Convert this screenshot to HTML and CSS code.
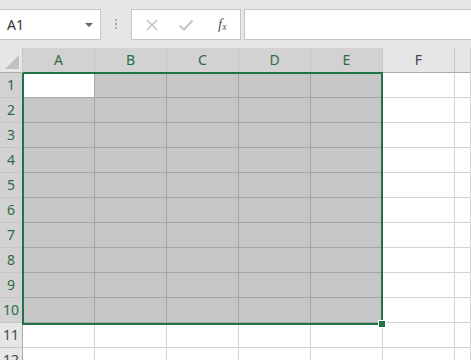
FILE: index.html
```
<!DOCTYPE html>
<html lang="ja">
  <head>
    <meta charset="UTF-8" />
    <meta name="viewport" content="width=device-width, initial-scale=1.0" />
    <title>Sheet</title>
    <link rel="stylesheet" href="styles.css">
  </head>
  <body>
    <div class="toolbar">
      <div class="name-box">
        <span class="name-text">A1</span>
        <span class="drop-arrow"></span>
      </div>
      <div class="grip"><span></span><span></span><span></span></div>
      <div class="fx-box">
        <svg class="tool-icon" width="14" height="14" viewBox="0 0 14 14">
          <path d="M2 2 L12 12 M12 2 L2 12" stroke="#c4c4c4" stroke-width="1.6" fill="none" />
        </svg>
        <svg class="tool-icon" width="16" height="14" viewBox="0 0 16 14">
          <path d="M1.5 7.5 L6 11.5 L14.5 2.5" stroke="#c4c4c4" stroke-width="2" fill="none" />
        </svg>
        <span class="fx">f<sub>x</sub></span>
      </div>
      <div class="formula-input"></div>
    </div>

    <div class="sheet" id="sheet">
      <div class="selection"><span class="fill-handle"></span></div>
    </div>

    <script>
      const sheet = document.getElementById("sheet");
      const cols = ["A", "B", "C", "D", "E", "F", ""];

      function cell(cls, text) {
        const div = document.createElement("div");
        div.className = cls;
        div.textContent = text || "";
        sheet.appendChild(div);
      }

      cell("corner");
      cols.forEach((c, i) => cell(i < 5 ? "col-head sel" : "col-head", c));

      for (let r = 1; r <= 12; r++) {
        cell(r <= 10 ? "row-head sel" : "row-head", r);
        cols.forEach((c, i) => {
          let cls = "cell";
          if (r <= 10 && i < 5) cls += r === 1 && i === 0 ? " active" : " picked";
          cell(cls);
        });
      }
    </script>
  </body>
</html>
```

FILE: styles.css
```
body {
  margin: 0;
  background: #fff;
  font-family: "Noto Sans", "Liberation Sans", sans-serif;
  overflow: hidden;
  width: 471px;
  height: 360px;
}

/* Formula bar */
.toolbar {
  height: 48px;
  background: #e6e6e6;
  display: flex;
  align-items: center;
}

.name-box {
  box-sizing: border-box;
  width: 102px;
  height: 31px;
  margin-left: -1px;
  margin-top: 1px;
  background: #fff;
  border: 1px solid #c6c6c6;
  display: flex;
  align-items: center;
  justify-content: space-between;
  padding: 0 7px 0 7px;
}

.name-text {
  font-size: 14px;
  color: #333;
}

.drop-arrow {
  width: 0;
  height: 0;
  border-left: 4px solid transparent;
  border-right: 4px solid transparent;
  border-top: 4px solid #666;
  margin-top: 1px;
}

.grip {
  width: 30px;
  display: flex;
  flex-direction: column;
  align-items: center;
  gap: 2px;
}

.grip span {
  width: 2px;
  height: 2px;
  background: #a6a6a6;
}

.fx-box {
  box-sizing: border-box;
  width: 110px;
  height: 31px;
  margin-top: 1px;
  background: #fff;
  border: 1px solid #c6c6c6;
  display: flex;
  align-items: center;
  padding-left: 13px;
  gap: 19px;
}

.fx {
  font-family: "Liberation Serif", serif;
  font-style: italic;
  font-size: 15px;
  color: #555;
  margin-left: 5px;
}

.fx sub {
  font-size: 10px;
  vertical-align: -1px;
}

.formula-input {
  flex: 1;
  box-sizing: border-box;
  height: 31px;
  margin-top: 1px;
  margin-left: 3px;
  margin-right: -2px;
  background: #fff;
  border: 1px solid #c6c6c6;
}

/* Grid */
.sheet {
  position: relative;
  display: grid;
  grid-template-columns: 23px repeat(6, 72px) 1fr;
  grid-template-rows: 25px repeat(12, 25px);
}

.sheet > div {
  box-sizing: border-box;
}

.corner {
  background: #e6e6e6;
  border-right: 1px solid #c6c6c6;
  border-bottom: 1px solid #ababab;
  position: relative;
}

.corner::after {
  content: "";
  position: absolute;
  right: 3px;
  bottom: 3px;
  width: 0;
  height: 0;
  border-left: 14px solid transparent;
  border-bottom: 14px solid #c0c0c0;
}

.col-head {
  background: #e6e6e6;
  border-right: 1px solid #c6c6c6;
  border-bottom: 1px solid #ababab;
  text-align: center;
  font-size: 14px;
  line-height: 24px;
  color: #444;
}

.row-head {
  background: #e6e6e6;
  border-right: 1px solid #ababab;
  border-bottom: 1px solid #c6c6c6;
  text-align: center;
  font-size: 14px;
  line-height: 24px;
  color: #444;
}

.col-head.sel,
.row-head.sel {
  background: #d2d2d2;
  color: #2e6b47;
}

.cell {
  border-right: 1px solid #d4d4d4;
  border-bottom: 1px solid #d4d4d4;
}

.cell.picked {
  background: #c6c6c6;
  border-color: #a6a6a6;
}

.cell.active {
  background: #fff;
  border-right-color: #a6a6a6;
  border-bottom-color: #a6a6a6;
}

/* Selection outline */
.selection {
  position: absolute;
  left: 22px;
  top: 24px;
  width: 361px;
  height: 253px;
  box-sizing: border-box;
  border: 2px solid #217346;
  pointer-events: none;
}

.fill-handle {
  position: absolute;
  right: -5px;
  bottom: -5px;
  width: 6px;
  height: 6px;
  background: #217346;
  border: 1px solid #fff;
}
```
